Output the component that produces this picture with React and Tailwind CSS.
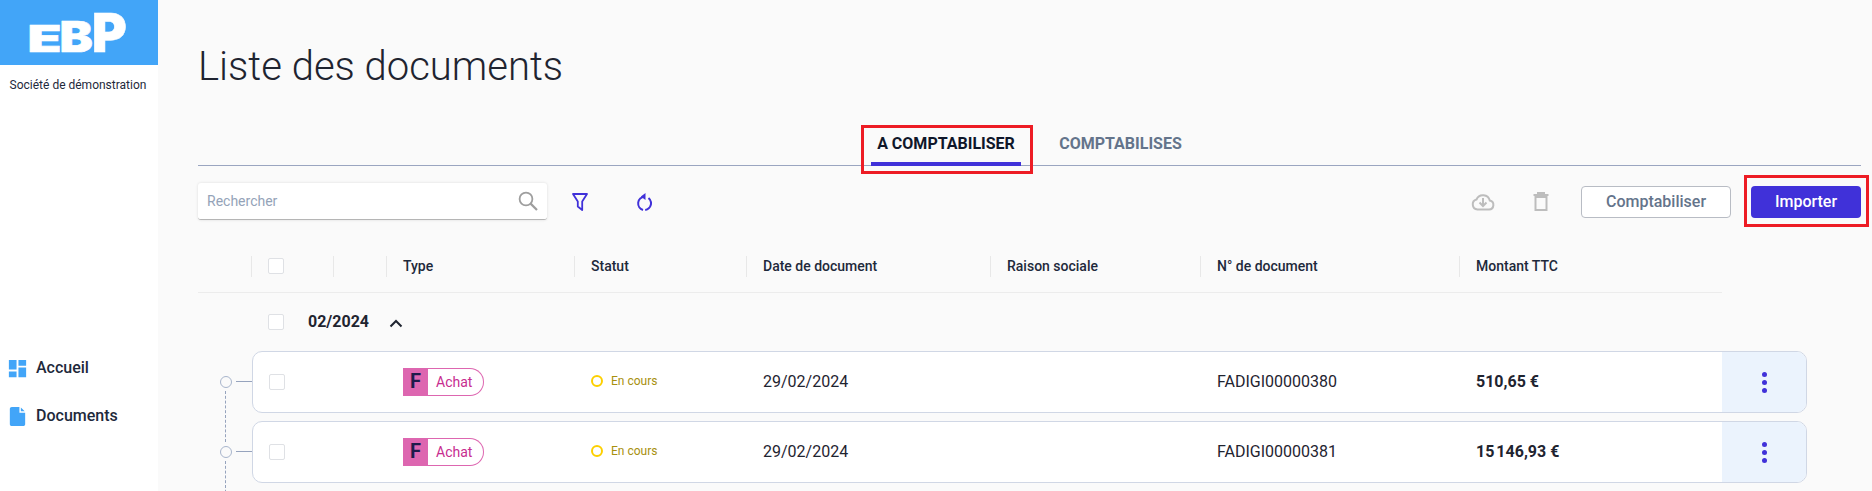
import React from "react";

const rows = [
  { number: "FADIGI00000380", amount: "510,65 €" },
  { number: "FADIGI00000381", amount: "15\u202f146,93 €" },
];

const headers = [
  { label: "", width: "w-[82px]", check: true },
  { label: "", width: "w-[53px]" },
  { label: "Type", width: "w-[188px]" },
  { label: "Statut", width: "w-[172px]" },
  { label: "Date de document", width: "w-[244px]" },
  { label: "Raison sociale", width: "w-[210px]" },
  { label: "N° de document", width: "w-[259px]" },
  { label: "Montant TTC", width: "w-[208px]" },
  { label: "", width: "w-[55px]" },
];

const Checkbox = () => (
  <span className="block w-4 h-4 shrink-0 bg-white border border-[#dfe1e5] rounded-[2px]" />
);

const Logo = () => (
  <svg width="158" height="65" viewBox="0 0 158 65" fontFamily="Inter, sans-serif" fontWeight="900" fill="#fff" stroke="#fff" strokeWidth="0.6">
    <text transform="translate(27.500 52) scale(1.5 1)" fontSize="37">E</text>
    <text transform="translate(59.500 52) scale(1.16 1)" fontSize="43">B</text>
    <text transform="translate(92 52) scale(0.98 1)" fontSize="54">P</text>
  </svg>
);

const App = () => {
  return (
    <div className="flex h-screen overflow-hidden bg-[#fafafa] text-[#1e293b] font-['Roboto',sans-serif]">
      <aside className="w-[158px] shrink-0 flex flex-col bg-white">
        <div className="h-[65px] bg-[#42a5f8]">
          <Logo />
        </div>
        <p className="mt-[11px] pr-[2px] text-center text-[12px] leading-[18px] whitespace-nowrap text-[#1e293b]">Société de démonstration</p>
        <nav className="mt-auto pb-[51px] font-medium text-[16px]">
          <div className="flex items-center h-12">
            <svg className="ml-[6px]" width="23" height="23" viewBox="0 0 24 24" fill="#42a5f8">
              <path d="M3 13h8V3H3v10zm0 8h8v-6H3v6zm10 0h8V11h-8v10zm0-18v6h8V3h-8z" />
            </svg>
            <span className="ml-[7px]">Accueil</span>
          </div>
          <div className="flex items-center h-12">
            <svg className="ml-[6px]" width="23" height="23" viewBox="0 0 24 24" fill="#42a5f8">
              <path d="M6 2c-1.100 0-2 .9-2 2v16c0 1.100.9 2 2 2h12c1.100 0 2-.9 2-2V8h-6V2H6zm9.500 .5V6.500H19.500z" />
            </svg>
            <span className="ml-[7px]">Documents</span>
          </div>
        </nav>
      </aside>

      <main className="flex-1 min-w-0 pl-10 pr-[11px] pt-[43px]">
        <h1 className="text-[40px] leading-[48px] font-light text-[#1f2430]">Liste des documents</h1>

        <div className="mt-[34px] flex justify-center gap-[32px] border-b border-[#9aa5c0]">
          <div className="relative -mb-px w-[150px] pt-[7px] pb-[6px] border-b-4 border-[#4031d9] text-center text-[16px] leading-6 font-bold text-[#0f172a]">
            A COMPTABILISER
            <span className="absolute left-[-10px] right-[-12px] top-0 bottom-[-12px] border-[3px] border-[#ed1c24]" />
          </div>
          <div className="w-[135px] pt-[7px] text-center text-[16px] leading-6 font-bold text-[#64748b] whitespace-nowrap">
            COMPTABILISES
          </div>
        </div>

        <div className="mt-[17px] flex items-center h-[37px]">
          <div className="w-[349px] h-[37px] flex items-center justify-between pl-[9px] pr-[9px] bg-white rounded-[3px] border-b border-[#b5b5b5] shadow-[0_0_3px_rgba(0,0,0,0.12)]">
            <span className="text-[14px] text-[#94a3b8]">Rechercher</span>
            <svg width="20" height="20" viewBox="0 0 20 20" fill="none" stroke="#9e9e9e" strokeWidth="1.800">
              <circle cx="8" cy="8" r="6.400" />
              <path d="M12.600 12.600 19 19" strokeWidth="2.200" />
            </svg>
          </div>
          <svg className="ml-[25px]" width="16" height="18" viewBox="0 0 16 18" fill="none" stroke="#4031d9" strokeWidth="1.800" strokeLinejoin="round">
            <path d="M1 1h14L10.200 8.500V17L5.800 13.500V8.500z" />
          </svg>
          <svg className="ml-[48px]" width="16" height="18" viewBox="0 0 16 18" fill="none" stroke="#4031d9" strokeWidth="2">
            <path d="M8.500 3.700A6.800 6.800 0 0 0 7 17" />
            <path d="M9.200 17A6.800 6.800 0 0 0 12.500 5" />
            <path d="M9.500 0 4.800 3.500 9.500 7z" fill="#4031d9" stroke="none" />
          </svg>
          <svg className="ml-auto" width="24" height="18" viewBox="0 0 24 18" fill="none" stroke="#bdbdbd" strokeWidth="2">
            <path d="M6.500 16.500h11.500a4.500 4.500 0 0 0 .8-8.900A7 7 0 0 0 5.500 6.500 5.100 5.100 0 0 0 6.500 16.500z" />
            <path d="M12 5v7.500M8.500 9.500l3.500 3.500 3.500-3.500" />
          </svg>
          <svg className="ml-[38px]" width="16" height="19" viewBox="0 0 16 19" fill="none" stroke="#bdbdbd" strokeWidth="2">
            <path d="M2.500 5h11v13h-11zM0.500 3h15M5 3V1h6v2" />
          </svg>
          <button className="ml-[32px] w-[150px] h-8 bg-white border border-[#b8bcc4] rounded-[4px] text-[16px] font-medium text-[#64748b]">
            Comptabiliser
          </button>
          <div className="relative ml-5">
            <button className="block w-[110px] h-8 bg-[#4031d9] rounded-[4px] text-[16px] font-medium text-white">
              Importer
            </button>
            <span className="absolute left-[-7px] right-[-8px] top-[-11px] bottom-[-9px] border-[3px] border-[#ed1c24]" />
          </div>
        </div>

        <div className="mt-[21px] w-[1524px] h-[52px] pl-[53px] pb-px flex items-center border-b border-[#ececec] text-[14px] font-medium">
          {headers.map((h, i) => (
            <div key={i} className={`${h.width} h-[21px] flex items-center pl-4 ${i === headers.length - 1 ? "" : "border-l border-[#e8e8e8]"}`}>
              {h.check ? <Checkbox /> : h.label}
            </div>
          ))}
        </div>

        <div className="flex items-center h-[58px] pl-[70px]">
          <Checkbox />
          <span className="ml-6 text-[16px] font-bold text-[#1f2430]">02/2024</span>
          <svg className="ml-5 mt-[2px]" width="14" height="9" viewBox="0 0 14 9" fill="none" stroke="#1f2430" strokeWidth="2">
            <path d="M1.500 7.500 7 2l5.500 5.500" />
          </svg>
        </div>

        <div className="flex flex-col gap-2 ml-[54px] w-[1555px]">
          {rows.map((row) => (
            <div key={row.number} className="relative flex items-center h-[62px] bg-white border border-[#d0d7e5] rounded-[10px] text-[#1f2430]">
              <span className="absolute left-[-33px] top-[24px] w-3 h-3 rounded-full border-[1.5px] border-[#a8b5cc]" />
              <span className="absolute left-[-17px] top-[29px] w-4 h-px bg-[#96a3bd]" />
              <span className="absolute left-[-28px] top-[39px] h-[51px] border-l border-dashed border-[#96a3bd]" />

              <div className="w-[150px] pl-4">
                <Checkbox />
              </div>
              <div className="w-[188px]">
                <div className="inline-flex h-7 w-[81px] items-stretch align-middle">
                  <span className="w-[25px] pb-[2px] flex items-center justify-center bg-[#dd66b0] text-[20px] font-bold text-[#1e1b4b]">F</span>
                  <span className="flex-1 pl-2 flex items-center bg-white border border-l-0 border-[#dd66b0] rounded-r-full text-[14px] text-[#c72c8f]">Achat</span>
                </div>
              </div>
              <div className="w-[172px] -mt-[2px] flex items-center gap-2 text-[12px] text-[#a8900f]">
                <span className="w-3 h-3 rounded-full border-2 border-[#fdd000]" />
                En cours
              </div>
              <div className="w-[244px] text-[16px]">29/02/2024</div>
              <div className="w-[210px]" />
              <div className="w-[259px] text-[16px]">{row.number}</div>
              <div className="flex-1 text-[16px] font-bold">{row.amount}</div>
              <div className="w-[84px] h-full flex flex-col items-center justify-center gap-[3px] bg-[#ebf3fd] rounded-r-[9px]">
                <span className="w-[5px] h-[5px] rounded-full bg-[#4031d9]" />
                <span className="w-[5px] h-[5px] rounded-full bg-[#4031d9]" />
                <span className="w-[5px] h-[5px] rounded-full bg-[#4031d9]" />
              </div>
            </div>
          ))}
        </div>
      </main>
    </div>
  );
};

export default App;
